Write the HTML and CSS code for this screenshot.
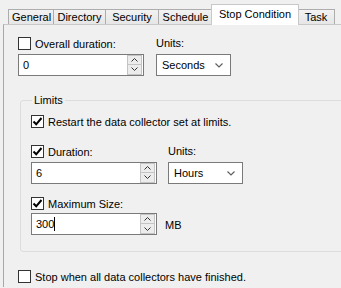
FILE: index.html
```html
<!DOCTYPE html>
<html lang="en">
<head>
    <meta charset="UTF-8">
    <title>Stop Condition</title>
    <link rel="stylesheet" href="styles.css">
</head>
<body>
    <div class="dialog">
        <div class="tabs">
            <div class="tab tab-general">General</div>
            <div class="tab tab-directory">Directory</div>
            <div class="tab tab-security">Security</div>
            <div class="tab tab-schedule">Schedule</div>
            <div class="tab tab-active">Stop Condition</div>
            <div class="tab tab-task">Task</div>
        </div>

        <div class="page">
            <div class="field-grid overall">
                <label class="check-label"><span class="check"></span>Overall duration:</label>
                <span class="field-label">Units:</span>
                <div class="spin">
                    <span class="spin-value">0</span>
                    <div class="spin-buttons">
                        <span class="spin-btn"><svg width="7" height="4" viewBox="0 0 7 4"><path d="M0.5 3.5 L3.5 0.5 L6.5 3.5" fill="none" stroke="#333" stroke-width="1"/></svg></span>
                        <span class="spin-btn"><svg width="7" height="4" viewBox="0 0 7 4"><path d="M0.5 0.5 L3.5 3.5 L6.5 0.5" fill="none" stroke="#333" stroke-width="1"/></svg></span>
                    </div>
                </div>
                <div class="combo">
                    <span>Seconds</span>
                    <svg width="8" height="5" viewBox="0 0 8 5"><path d="M0.5 0.5 L4 4 L7.5 0.5" fill="none" stroke="#606060" stroke-width="1.2"/></svg>
                </div>
            </div>

            <fieldset class="group">
                <legend>Limits</legend>

                <label class="check-label restart">
                    <span class="check checked"><svg width="11" height="11" viewBox="0 0 11 11"><path d="M1.5 5.5 L4.2 8.3 L9.5 2" fill="none" stroke="#000" stroke-width="2"/></svg></span>Restart the data collector set at limits.
                </label>

                <div class="field-grid duration">
                    <label class="check-label">
                        <span class="check checked"><svg width="11" height="11" viewBox="0 0 11 11"><path d="M1.5 5.5 L4.2 8.3 L9.5 2" fill="none" stroke="#000" stroke-width="2"/></svg></span>Duration:
                    </label>
                    <span class="field-label">Units:</span>
                    <div class="spin">
                        <span class="spin-value">6</span>
                        <div class="spin-buttons">
                            <span class="spin-btn"><svg width="7" height="4" viewBox="0 0 7 4"><path d="M0.5 3.5 L3.5 0.5 L6.5 3.5" fill="none" stroke="#333" stroke-width="1"/></svg></span>
                            <span class="spin-btn"><svg width="7" height="4" viewBox="0 0 7 4"><path d="M0.5 0.5 L3.5 3.5 L6.5 0.5" fill="none" stroke="#333" stroke-width="1"/></svg></span>
                        </div>
                    </div>
                    <div class="combo">
                        <span>Hours</span>
                        <svg width="8" height="5" viewBox="0 0 8 5"><path d="M0.5 0.5 L4 4 L7.5 0.5" fill="none" stroke="#606060" stroke-width="1.2"/></svg>
                    </div>
                </div>

                <div class="max-size">
                    <label class="check-label">
                        <span class="check checked"><svg width="11" height="11" viewBox="0 0 11 11"><path d="M1.5 5.5 L4.2 8.3 L9.5 2" fill="none" stroke="#000" stroke-width="2"/></svg></span>Maximum Size:
                    </label>
                    <div class="size-row">
                        <div class="spin">
                            <span class="spin-value">300<span class="caret"></span></span>
                            <div class="spin-buttons">
                                <span class="spin-btn"><svg width="7" height="4" viewBox="0 0 7 4"><path d="M0.5 3.5 L3.5 0.5 L6.5 3.5" fill="none" stroke="#333" stroke-width="1"/></svg></span>
                                <span class="spin-btn"><svg width="7" height="4" viewBox="0 0 7 4"><path d="M0.5 0.5 L3.5 3.5 L6.5 0.5" fill="none" stroke="#333" stroke-width="1"/></svg></span>
                            </div>
                        </div>
                        <span class="unit">MB</span>
                    </div>
                </div>
            </fieldset>

            <label class="check-label stop-all"><span class="check"></span>Stop when all data collectors have finished.</label>
        </div>
    </div>
</body>
</html>
```

FILE: styles.css
```css
body {
    margin: 0;
    background-color: #f0f0f0;
    font-family: "Liberation Sans", Arial, sans-serif;
    font-size: 11px;
    color: #000;
    overflow: hidden;
}

.dialog {
    width: 341px;
    height: 288px;
    overflow: hidden;
}

/* Tabs */
.tabs {
    display: flex;
    align-items: flex-end;
    height: 24px;
    padding-left: 9px;
}
.tab {
    box-sizing: border-box;
    height: 15px;
    line-height: 15px;
    padding: 0 3px;
    text-align: center;
    border: 1px solid #adadad;
    border-bottom: none;
    margin-left: -1px;
    background: linear-gradient(#f2f2f2, #e6e6e6);
    white-space: nowrap;
}
.tab-general { width: 46px; }
.tab-directory { width: 53px; }
.tab-security { width: 54px; }
.tab-schedule { width: 55px; }
.tab-task { width: 38px; }
.tab-active {
    position: relative;
    z-index: 1;
    width: 88px;
    height: 21px;
    line-height: 19px;
    margin: 0 -1px -1px -2px;
    background: #fff;
    border-color: #c8c8c8;
}

/* Page */
.page {
    margin-left: 3px;
    height: 263px;
    border-top: 1px solid #c8c8c8;
    border-left: 1px solid #a8a8a8;
    padding: 12px 0 0 14px;
    box-sizing: border-box;
}

.field-grid {
    display: grid;
    grid-template-columns: 126px 75px;
    column-gap: 12px;
    row-gap: 3px;
    align-items: center;
}
.field-label {
    line-height: 13px;
}

.check-label {
    display: flex;
    align-items: center;
    height: 13px;
    white-space: nowrap;
}
.check {
    display: inline-flex;
    align-items: center;
    justify-content: center;
    width: 11px;
    height: 11px;
    border: 1px solid #333;
    background: #fff;
    margin-right: 4px;
    flex-shrink: 0;
}

.spin {
    display: flex;
    align-items: center;
    justify-content: space-between;
    height: 20px;
    border: 1px solid #7a7a7a;
    background: #fff;
    padding-left: 4px;
    padding-right: 1px;
}
.spin-value {
    display: flex;
    align-items: center;
}
.caret {
    display: inline-block;
    width: 1px;
    height: 14px;
    background: #000;
}
.spin-buttons {
    display: flex;
    flex-direction: column;
}
.spin-btn {
    display: flex;
    align-items: center;
    justify-content: center;
    width: 13px;
    height: 8px;
    border: 1px solid #c4c4c4;
    background: #ececec;
}
.spin-btn + .spin-btn {
    border-top: none;
    height: 9px;
}

.combo {
    display: flex;
    align-items: center;
    justify-content: space-between;
    height: 20px;
    border: 1px solid #7a7a7a;
    background: #fff;
    padding: 0 7px 0 5px;
    margin-top: 1px;
}

/* Limits group */
.group {
    margin: 17px -20px 0 2px;
    padding: 8px 0 16px 10px;
    border: 1px solid #dcdcdc;
    border-radius: 3px;
}
.group legend {
    padding: 0 2px;
    margin-left: 1px;
    line-height: 14px;
}
.restart {
    margin-bottom: 17px;
}
.duration {
    column-gap: 11px;
}
.max-size {
    margin-top: 13px;
    display: flex;
    flex-direction: column;
    gap: 3px;
}
.size-row {
    display: flex;
    align-items: center;
    gap: 8px;
}
.size-row .spin {
    width: 119px;
}
.unit {
    padding-top: 1px;
}

.stop-all {
    margin-top: 18px;
}
```
